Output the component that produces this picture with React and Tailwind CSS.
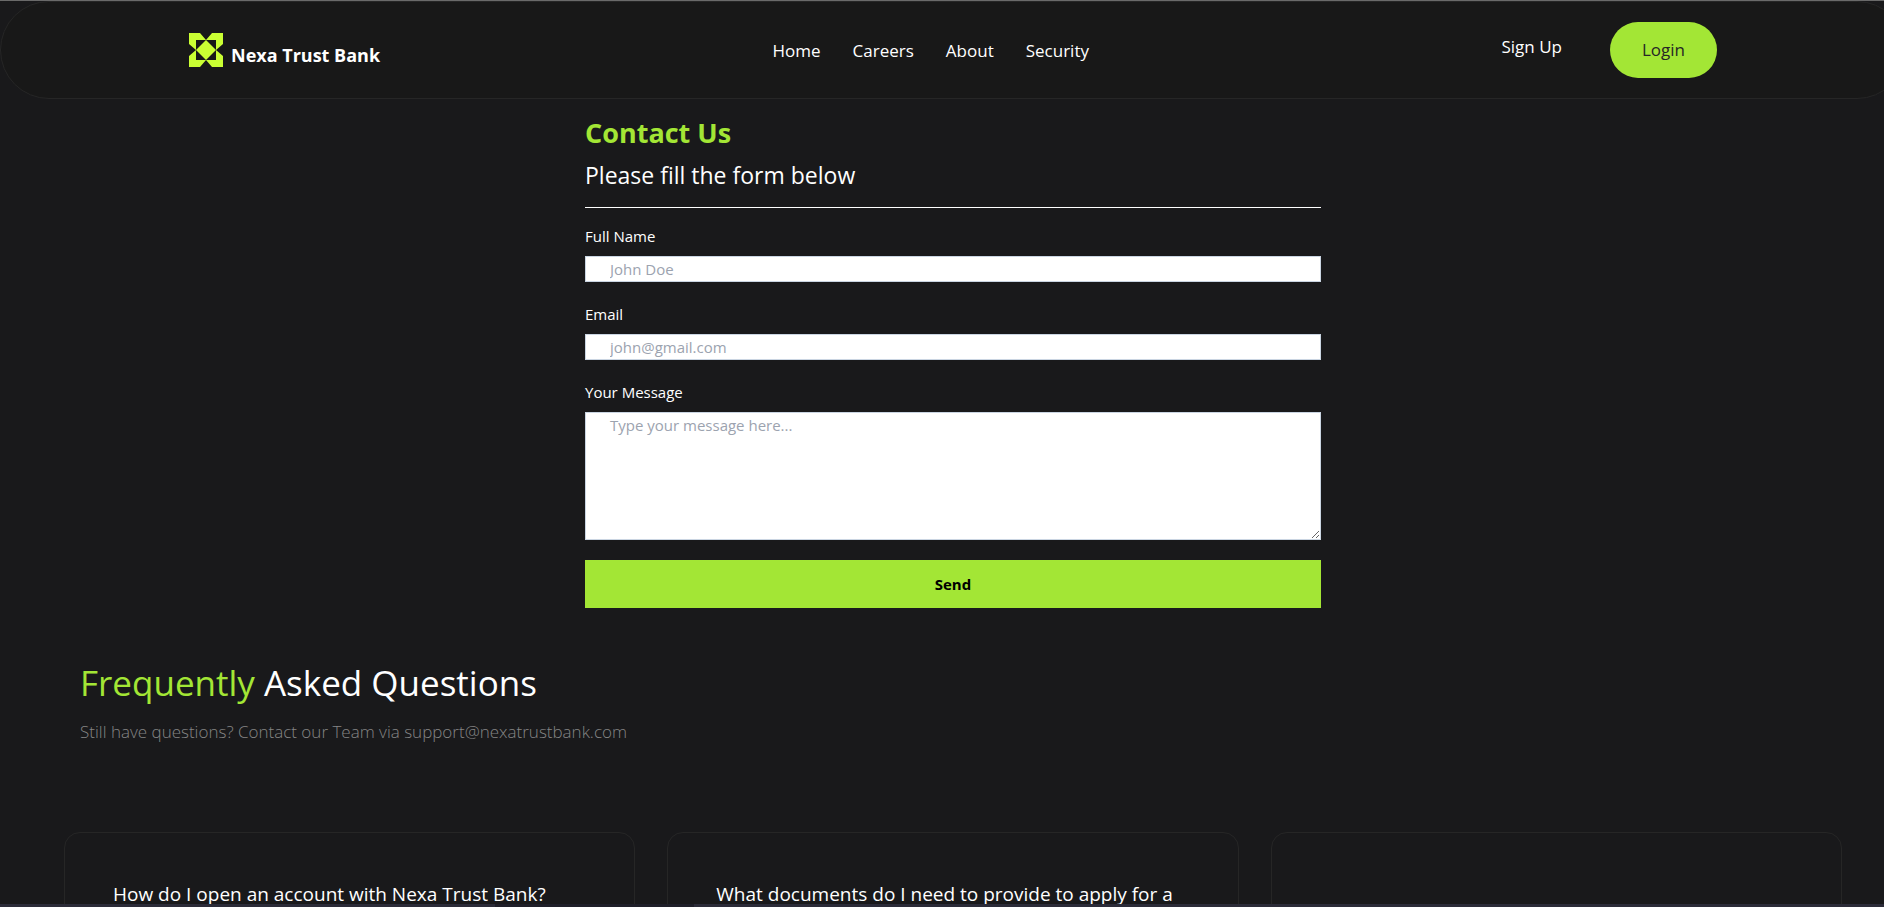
const navLinks = ["Home", "Careers", "About", "Security"];

const questions = [
  "How do I open an account with Nexa Trust Bank?",
  "What documents do I need to provide to apply for a",
  "",
];

function Logo() {
  return (
    <svg viewBox="0 0 34 34" className="h-[34px] w-[34px]" aria-hidden="true">
      <path
        fill="#caff33"
        fillRule="evenodd"
        d="M0 0H11L17 7L23 0H34V11L27 17L34 23V34H23L17 27L11 34H0V23L7 17L0 11ZM7 7V27H27V7Z"
      />
      <path fill="#caff33" d="M17 7L27 17L17 27L7 17Z" />
    </svg>
  );
}

function Header() {
  return (
    <header className="flex items-center justify-between rounded-full border border-[#262626] bg-[#181818] px-[188px] py-5">
      <a href="#home" className="flex items-end gap-2 text-[18px] leading-6 font-bold">
        <Logo />
        <span>Nexa Trust Bank</span>
      </a>
      <nav className="mr-5 flex gap-8 pt-px text-[17px] leading-7">
        {navLinks.map((label) => (
          <a key={label} href={"#" + label.toLowerCase()}>
            {label}
          </a>
        ))}
      </nav>
      <div className="flex items-start gap-12 text-[17px] leading-7">
        <a href="#signup" className="pt-[11px]">
          Sign Up
        </a>
        <a href="#login" className="rounded-full bg-[#a3e635] px-8 py-[14px] text-[#262626]">
          Login
        </a>
      </div>
    </header>
  );
}

const fieldClass =
  "block w-full border border-slate-300 bg-white px-6 text-[15px] leading-6 text-gray-900 placeholder:text-[#9ca3af]";

function Field({ id, label, children }) {
  return (
    <div className="mb-5">
      <label htmlFor={id} className="mb-2 block text-[15px] leading-6">
        {label}
      </label>
      {children}
    </div>
  );
}

function ContactForm() {
  return (
    <form className="mx-auto w-full max-w-3xl p-4">
      <h1 className="text-[27px] leading-9 font-bold text-[#a3e635]">Contact Us</h1>
      <p className="mt-2 text-[23px] leading-8">Please fill the form below</p>
      <hr className="my-4 border-white" />
      <Field id="name" label="Full Name">
        <input id="name" type="text" placeholder="John Doe" className={fieldClass} />
      </Field>
      <Field id="email" label="Email">
        <input id="email" type="email" placeholder="john@gmail.com" className={fieldClass} />
      </Field>
      <Field id="message" label="Your Message">
        <textarea
          id="message"
          placeholder="Type your message here..."
          className={fieldClass + " h-32 resize"}
        />
      </Field>
      <button type="button" className="block h-12 w-full bg-[#a3e635] text-[15px] font-bold text-black">
        Send
      </button>
    </form>
  );
}

function Faq() {
  return (
    <section className="px-16 pt-10">
      <div className="px-4">
        <h2 className="text-[35px] leading-[38px]">
          <span className="text-[#a3e635]">Frequently</span> Asked Questions
        </h2>
        <p className="mt-4 text-[17px] leading-7 font-light text-[#858585]">
          Still have questions? Contact our Team via support@nexatrustbank.com
        </p>
      </div>
      <div className="mt-[86px] grid grid-cols-3 gap-8">
        {questions.map((question, index) => (
          <article key={index} className="min-h-60 rounded-2xl border border-[#262626] p-12">
            <h3 className="text-[19px] leading-[26px]">{question}</h3>
          </article>
        ))}
      </div>
    </section>
  );
}

export default function App() {
  return (
    <div className="flex h-screen flex-col overflow-hidden border-t border-[#6a6a6a] bg-[#19191b] font-['Open_Sans','Noto_Sans',sans-serif] text-white">
      <div className="min-h-0 w-[calc(100%+22px)] flex-1 overflow-hidden">
        <Header />
        <main>
          <ContactForm />
          <Faq />
        </main>
      </div>
      <div className="flex h-[3px] shrink-0 bg-[#2b2b38]">
        <div className="ml-[495px] w-[199px] bg-[#1f1f29]" />
      </div>
    </div>
  );
}
